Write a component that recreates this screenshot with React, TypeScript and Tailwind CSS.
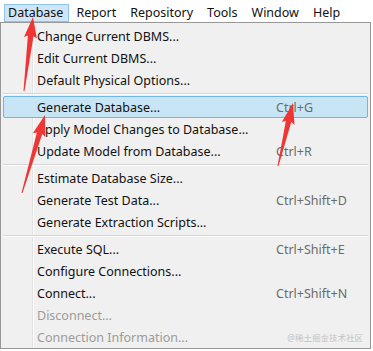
type Item = { label: string; key?: string; off?: boolean; hot?: boolean } | "sep";

const items: Item[] = [
  { label: "Change Current DBMS..." },
  { label: "Edit Current DBMS..." },
  { label: "Default Physical Options..." },
  "sep",
  { label: "Generate Database...", key: "Ctrl+G", hot: true },
  { label: "Apply Model Changes to Database..." },
  { label: "Update Model from Database...", key: "Ctrl+R" },
  "sep",
  { label: "Estimate Database Size..." },
  { label: "Generate Test Data...", key: "Ctrl+Shift+D" },
  { label: "Generate Extraction Scripts..." },
  "sep",
  { label: "Execute SQL...", key: "Ctrl+Shift+E" },
  { label: "Configure Connections..." },
  { label: "Connect...", key: "Ctrl+Shift+N" },
  { label: "Disconnect...", off: true },
  { label: "Connection Information...", off: true },
];

const menus = ["Report", "Repository", "Tools", "Window", "Help"];

// tapered red arrow, tail -> tip
function arrow(tx: number, ty: number, px: number, py: number) {
  const dx = px - tx;
  const dy = py - ty;
  const len = Math.hypot(dx, dy);
  const ux = dx / len;
  const uy = dy / len;
  const nx = -uy;
  const ny = ux;
  const head = 19;
  const hw = 6.5;
  const sw = 2.8;
  const bx = px - ux * head;
  const by = py - uy * head;
  const pts = [
    [tx + nx * 0.5, ty + ny * 0.5],
    [bx + nx * sw, by + ny * sw],
    [bx + nx * hw - ux * 2, by + ny * hw - uy * 2],
    [px, py],
    [bx - nx * hw - ux * 2, by - ny * hw - uy * 2],
    [bx - nx * sw, by - ny * sw],
    [tx - nx * 0.5, ty - ny * 0.5],
  ];
  return pts.map((p) => p[0].toFixed(1) + "," + p[1].toFixed(1)).join(" ");
}

export default function App() {
  return (
    <div className="relative w-[373px] h-[351px] bg-white overflow-hidden text-[12.5px] text-[#111] font-['Noto_Sans','Noto_Sans_CJK_SC',sans-serif]">
      <div className="flex items-center h-[22px] bg-white">
        <div className="ml-1 h-[18px] mt-[4px] pl-[3px] pr-[5px] flex items-center border border-[#8fc4ee] bg-[#cfe6f8] leading-none">
          Database
        </div>
        {menus.map((m) => (
          <div key={m} className="px-[7px] mt-[4px] leading-none">
            {m}
          </div>
        ))}
      </div>

      <div className="relative w-[371px] h-[327px] border border-[#979797] bg-[#f0f0f0] pt-[2px] px-[2px]">
        <div className="absolute left-[31px] top-0 bottom-0 w-[2px] border-l border-[#e2e2e2] bg-[#f0f0f0] border-r border-r-white" />
        {items.map((it, i) =>
          it === "sep" ? (
            <div key={i} className="relative h-[5px] flex items-center">
              <div className="w-full h-[2px] border-t border-[#d5d5d5] border-b border-b-white" />
            </div>
          ) : (
            <div
              key={i}
              className={
                "relative flex items-center h-[22px] pt-[3px] rounded-[2px] border " +
                (it.hot ? "border-[#6fb6e3] bg-[#c8e5f5]" : "border-transparent")
              }
            >
              <span className={"pl-[33px] w-[272px] " + (it.off ? "text-[#9b9b9b]" : "")}>{it.label}</span>
              {it.key && <span className="text-[#6b6b6b]">{it.key}</span>}
            </div>
          )
        )}
        <div className="absolute right-[7px] bottom-[3px] text-[8.5px] text-[#c4c4c4]">@稀土掘金技术社区</div>
      </div>

      <svg className="absolute inset-0 pointer-events-none" width="373" height="351">
        <polygon points={arrow(24, 91, 33, 17)} fill="#f03535" />
        <polygon points={arrow(22, 193, 45, 115)} fill="#f03535" />
        <polygon points={arrow(278, 166, 293, 103)} fill="#f03535" />
      </svg>
    </div>
  );
}
